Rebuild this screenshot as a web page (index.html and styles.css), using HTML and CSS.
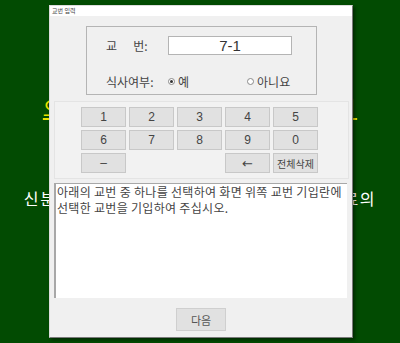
FILE: index.html
```html
<!doctype html>
<html>
	<head>
		<meta charset="utf-8">
		<title>교번 입력</title>
		<link rel="stylesheet" href="styles.css">
	</head>
	<body>
		<div class="screen">
			<p class="headline">오늘의 점심 식사 교번 선택 안내</p>
			<p class="notice">신분증을 지참하신 분은 교번을 선택하여 자료의</p>
		</div>
		<div class="dialog">
			<div class="titlebar">교번 입력</div>
			<div class="groupbox">
				<div class="row">
					<span class="label">교&nbsp;&nbsp;&nbsp;&nbsp;&nbsp;&nbsp;번:</span>
					<div class="input">7-1</div>
				</div>
				<div class="row">
					<span class="label">식사여부:</span>
					<span class="radio"><i class="dot on"></i>예</span>
					<span class="radio second"><i class="dot"></i>아니요</span>
				</div>
			</div>
			<div class="keypad">
				<button class="key">1</button>
				<button class="key">2</button>
				<button class="key">3</button>
				<button class="key">4</button>
				<button class="key">5</button>
				<button class="key">6</button>
				<button class="key">7</button>
				<button class="key">8</button>
				<button class="key">9</button>
				<button class="key">0</button>
				<button class="key">–</button>
				<span></span>
				<span></span>
				<button class="key arrow">←</button>
				<button class="key small">전체삭제</button>
			</div>
			<div class="memo">아래의 교번 중 하나를 선택하여 화면 위쪽 교번 기입란에<br>선택한 교번을 기입하여 주십시오.</div>
			<div class="actions">
				<button class="next">다음</button>
			</div>
		</div>
	</body>
</html>
```

FILE: styles.css
```css
*{
	margin:0;
	padding:0;
	box-sizing:border-box;
}
body{
	width:400px;
	height:343px;
	overflow:hidden;
	background-color:#024b02;
	font-family:"Noto Sans CJK KR","Liberation Sans",sans-serif;
	position:relative;
}
.screen{
	padding-top:94px;
	text-align:center;
	white-space:nowrap;
}
.headline{
	color:#e8e000;
	font-size:21px;
	line-height:26px;
	letter-spacing:2.2px;
	text-decoration:underline;
}
.notice{
	margin-top:66px;
	color:#ffffff;
	font-size:16px;
	line-height:24px;
	letter-spacing:1.6px;
}
.dialog{
	position:absolute;
	left:49px;
	top:5px;
	width:304px;
	height:333px;
	background-color:#f0f0f0;
	border:1px solid #7a7a7a;
	border-top-color:#dcdcdc;
	border-left-color:#dcdcdc;
	box-shadow:2px 2px 3px rgba(0,0,0,0.45);
}
.titlebar{
	height:10px;
	background-color:#ffffff;
	font-size:6px;
	line-height:10px;
	padding-left:2px;
	color:#444;
}
.groupbox{
	margin:10px 35px 0 36px;
	height:69px;
	border:1px solid #b4b4b4;
	padding:9px 0 0 19px;
}
.row{
	display:flex;
	align-items:center;
	height:19px;
	color:#444;
	font-size:12px;
}
.row + .row{
	margin-top:17px;
}
.label{
	width:62px;
}
.input{
	width:124px;
	height:19px;
	background-color:#ffffff;
	border:1px solid #b4b4b4;
	text-align:center;
	font-family:"Liberation Sans",sans-serif;
	font-size:15px;
	line-height:17px;
	color:#333;
}
.radio{
	display:flex;
	align-items:center;
	gap:3px;
	font-size:12px;
}
.second{
	margin-left:58px;
}
.dot{
	display:inline-block;
	width:7px;
	height:7px;
	border:1px solid #8a8a8a;
	border-radius:50%;
	background-color:#fff;
	position:relative;
}
.dot.on::after{
	content:"";
	position:absolute;
	left:1px;
	top:1px;
	width:3px;
	height:3px;
	border-radius:50%;
	background-color:#333;
}
.keypad{
	margin:6px 3px 0 4px;
	height:78px;
	border:1px solid #e4e4e4;
	background-color:#f2f2f2;
	padding:5px 0 0 26px;
	display:grid;
	grid-template-columns:repeat(5,45px);
	grid-auto-rows:20px;
	column-gap:3px;
	row-gap:3px;
}
.key{
	background-color:#e1e1e1;
	border:1px solid #c8c8c8;
	font-family:"Liberation Sans",sans-serif;
	font-size:12px;
	color:#444;
}
.key.arrow{
	font-family:"DejaVu Sans",sans-serif;
	font-size:13px;
}
.key.small{
	font-family:"Noto Sans CJK KR",sans-serif;
	font-size:10px;
}
.memo{
	margin:4px 5px 0 4px;
	height:115px;
	background-color:#ffffff;
	border-left:2px solid #a8a8a8;
	border-top:1px solid #a8a8a8;
	padding:0 0 0 1px;
	font-size:12px;
	line-height:16px;
	letter-spacing:0.3px;
	color:#444;
}
.actions{
	display:flex;
	justify-content:center;
	padding-top:10px;
}
.next{
	width:50px;
	height:23px;
	background-color:#e1e1e1;
	border:1px solid #cfcfcf;
	font-family:"Noto Sans CJK KR",sans-serif;
	font-size:11px;
	color:#555;
}
```
